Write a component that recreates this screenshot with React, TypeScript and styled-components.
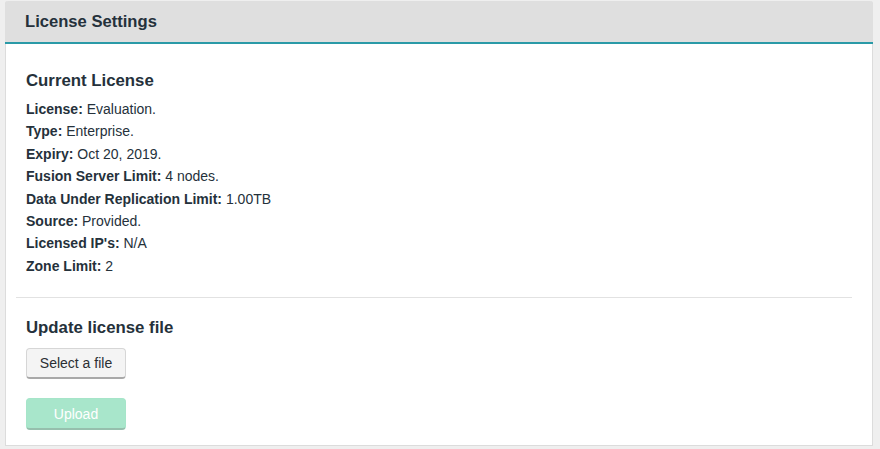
import React from "react";
import styled, { createGlobalStyle } from "styled-components";

const Global = createGlobalStyle`
  html, body { margin: 0; padding: 0; background: #efefef; }
  body { font-family: "Liberation Sans", Arial, Helvetica, sans-serif; color: #25313b; }
`;

const Page = styled.div`
  padding: 1px 7px 3px 5px;
`;

const Panel = styled.section`
  background: #fff;
  border: 1px solid #dcdcdc;
  border-top: none;
  border-radius: 3px 3px 0 0;
`;

const Header = styled.header`
  height: 41px;
  background: #dfdfdf;
  border-bottom: 2px solid #2a9aa7;
  border-radius: 3px 3px 0 0;
  display: flex;
  align-items: center;
  padding: 0 20px;
  margin: 0 -1px;
`;

const HeaderTitle = styled.h2`
  margin: 0;
  font-size: 16.6px;
  font-weight: bold;
  color: #25313b;
`;

const Body = styled.div`
  padding: 27px 20px 15px 10px;
`;

const Section = styled.div`
  padding: 0 10px;
`;

const SectionTitle = styled.h3<{ $gap?: number }>`
  margin: 0 0 ${(p) => p.$gap ?? 7}px;
  font-size: 16.8px;
  font-weight: bold;
  line-height: 20px;
  color: #25313b;
`;

const InfoList = styled.ul`
  list-style: none;
  margin: 0;
  padding: 0;
`;

const InfoRow = styled.li`
  font-size: 14px;
  line-height: 22.4px;
  color: #25313b;
`;

const Label = styled.b`
  font-weight: bold;
`;

const Divider = styled.hr`
  border: none;
  border-top: 1px solid #e2e2e2;
  margin: 20px 0 20px;
`;

const Button = styled.button<{ $variant?: "default" | "success" }>`
  display: block;
  width: 100px;
  height: 31px;
  padding: 0;
  font-family: "Liberation Sans", Arial, Helvetica, sans-serif;
  font-size: 14px;
  border-radius: 4px;
  cursor: pointer;
  border: 1px solid ${(p) => (p.$variant === "success" ? "#a6e5c9" : "#d6d6d6")};
  border-bottom: 2px solid ${(p) => (p.$variant === "success" ? "#96bfad" : "#a9a9a9")};
  background: ${(p) => (p.$variant === "success" ? "#a8e6cb" : "#f4f4f4")};
  color: ${(p) => (p.$variant === "success" ? "#ffffff" : "#2b2f33")};
  &:disabled { color: #ffffff; cursor: default; }
  & + & { margin-top: 19px; height: 32px; }
`;

const rows: [string, string][] = [
  ["License:", "Evaluation."],
  ["Type:", "Enterprise."],
  ["Expiry:", "Oct 20, 2019."],
  ["Fusion Server Limit:", "4 nodes."],
  ["Data Under Replication Limit:", "1.00TB"],
  ["Source:", "Provided."],
  ["Licensed IP's:", "N/A"],
  ["Zone Limit:", "2"],
];

export default function App() {
  return (
    <Page>
      <Global />
      <Panel>
        <Header>
          <HeaderTitle>License Settings</HeaderTitle>
        </Header>
        <Body>
          <Section>
            <SectionTitle>Current License</SectionTitle>
            <InfoList>
              {rows.map(([k, v]) => (
                <InfoRow key={k}>
                  <Label>{k}</Label> {v}
                </InfoRow>
              ))}
            </InfoList>
          </Section>
          <Divider />
          <Section>
            <SectionTitle $gap={10}>Update license file</SectionTitle>
            <Button>Select a file</Button>
            <Button $variant="success" disabled>Upload</Button>
          </Section>
        </Body>
      </Panel>
    </Page>
  );
}
